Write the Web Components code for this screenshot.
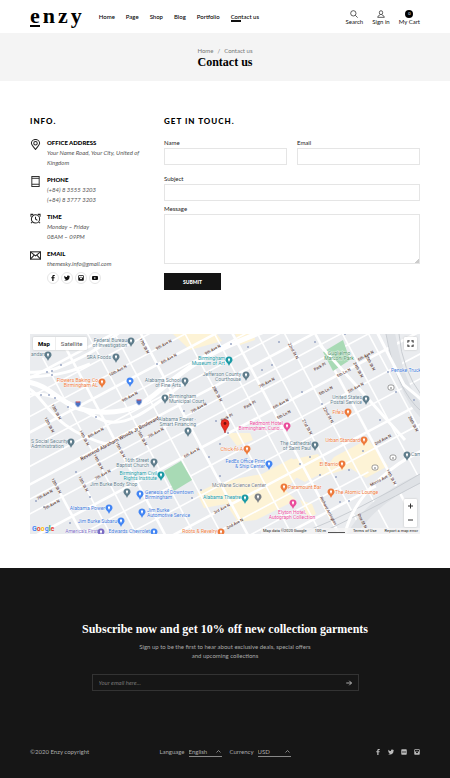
<!DOCTYPE html>
<html lang="en">
<head>
<meta charset="utf-8">
<meta name="viewport" content="width=device-width, initial-scale=1">
<title>Contact us – Enzy</title>
<style>
  body { margin: 0; background: #fff; color: #111; font: 5px/10px Lato, "Open Sans", sans-serif; }
</style>
</head>
<body>
<enzy-page></enzy-page>
<script>
const define = (name, html, setup) => {
  const tpl = document.createElement('template');
  tpl.innerHTML = '<style>*{box-sizing:border-box}a{color:inherit;text-decoration:none}button,input,select,textarea{font:inherit;color:inherit;margin:0;padding:0;border:0;background:none;border-radius:0}h1,h2,h3,p{margin:0}</style>' + html;
  customElements.define(name, class extends HTMLElement {
    constructor() {
      super();
      this.attachShadow({ mode: 'open' }).append(tpl.content.cloneNode(true));
    }
    connectedCallback() { if (setup) setup(this, this.shadowRoot); }
  });
};

const icons = {
  search: '<g fill="none" stroke="currentColor" stroke-width="2"><circle cx="10" cy="10" r="8"/><path d="M16 16l7 7"/></g>',
  user: '<g fill="none" stroke="currentColor" stroke-width="2"><ellipse cx="12" cy="8" rx="5" ry="6"/><path d="M9 14c0 3-7 2-7 8h20c0-6-7-5-7-8"/></g>',
  pin: '<g fill="none" stroke="currentColor" stroke-width="2.200"><path d="M12 23C8 17 3 13 3 9.500a9 8.500 0 0 1 18 0c0 3.500-5 7.500-9 13.500z"/><circle cx="12" cy="9.500" r="3.800"/></g>',
  phone: '<g fill="none" stroke="currentColor" stroke-width="2"><rect x="4" y="1" width="16" height="22"/><path d="M4 5h16M4 18h16"/></g>',
  clock: '<g fill="none" stroke="currentColor" stroke-width="2.200"><circle cx="12" cy="13" r="9"/><path d="M12 8v5l4 3M2 8V3h5M22 8V3h-5M5 20l-3 2M19 20l3 2"/></g>',
  mail: '<g fill="none" stroke="currentColor" stroke-width="2.200"><rect x="1" y="4" width="22" height="16"/><path d="M1 4l11 9L23 4M1 20l8-9M23 20l-8-9"/></g>',
  facebook: '<path fill="currentColor" d="M9 24V13H5V9h4V6c0-4 2-6 6-6h4v4h-3c-2 0-2 1-2 2v3h5l-1 4h-4v11z"/>',
  twitter: '<path fill="currentColor" d="M24 5l-3 1 2-3-3 1c-4-4-9 0-8 4C7 8 4 6 2 3c-2 3 0 6 1 7L1 9c0 3 2 5 4 6H3c1 2 3 3 5 3-2 2-5 2-8 2 12 6 22-1 22-12z"/>',
  instagram: '<path fill="currentColor" fill-rule="evenodd" d="M4 1h16a3 3 0 0 1 3 3v16a3 3 0 0 1-3 3H4a3 3 0 0 1-3-3V4a3 3 0 0 1 3-3zM4 4v6h3a6 6 0 0 1 10 0h3V4zM12 9a4 4 0 1 0 0 8 4 4 0 0 0 0-8z"/>',
  youtube: '<path fill="currentColor" fill-rule="evenodd" d="M4 4h16q4 0 4 4v8q0 4-4 4H4q-4 0-4-4V8q0-4 4-4zM9 8v8l7-4z"/>',
  flickr: '<path fill="currentColor" fill-rule="evenodd" d="M4 1h16a3 3 0 0 1 3 3v16a3 3 0 0 1-3 3H4a3 3 0 0 1-3-3V4a3 3 0 0 1 3-3zM8 9a3 3 0 1 0 0 6 3 3 0 0 0 0-6zM16 9a3 3 0 1 0 0 6 3 3 0 0 0 0-6z"/>',
  arrow: '<path fill="none" stroke="currentColor" stroke-width="3" d="M1 12h21M13 3l9 9-9 9"/>',
  expand: '<path fill="none" stroke="currentColor" stroke-width="3.500" d="M3 9V3h6M15 3h6v6M21 15v6h-6M9 21H3v-6"/>',
  plus: '<path fill="none" stroke="currentColor" stroke-width="4" d="M2 12h20M12 2v20"/>',
  minus: '<path fill="none" stroke="currentColor" stroke-width="4" d="M2 12h20"/>'
};
define('ui-icon', '<style>:host{display:block;width:8px;height:8px}svg{display:block;width:100%;height:100%}</style><svg viewBox="0 0 24 24" aria-hidden="true"></svg>',
  (el, root) => { root.querySelector('svg').innerHTML = icons[el.getAttribute('name')]; });

define('enzy-header', `<style>
  :host{display:flex;height:33px;padding:0 30px;align-items:center;justify-content:space-between;font-size:6px;line-height:8px;color:#111}
  .left,nav,.tools{display:flex}
  .left{align-items:center;gap:17px}
  .logo{font:bold 22px/22px "Liberation Serif",serif;letter-spacing:3px;margin-right:-3px;padding-bottom:2px;color:#000}
  .logo span{display:inline-block;position:relative}
  .logo span::after{content:"";position:absolute;left:0;right:3px;bottom:0;height:2px;background:#000}
  nav{gap:11px;font-weight:500;color:#000}
  nav a{position:relative}
  .on::after{content:"";position:absolute;left:0;bottom:-1px;width:10px;height:2px;background:#111}
  .tools{gap:9px;padding-top:3px}
  .tools a{display:flex;flex-direction:column;align-items:center}
  .count{width:8px;height:8px;border-radius:50%;background:#000;color:#fff;font-size:4px;text-align:center}
</style>
<div class="left"><a class="logo" href="#"><span>e</span>nzy</a>
<nav><a href="#">Home</a><a href="#">Page</a><a href="#">Shop</a><a href="#">Blog</a><a href="#">Portfolio</a><a class="on" href="#">Contact us</a></nav></div>
<div class="tools"><a href="#"><ui-icon name="search"></ui-icon>Search</a><a href="#"><ui-icon name="user"></ui-icon>Sign in</a><a href="#"><span class="count">0</span>My Cart</a></div>`);

define('enzy-title', `<style>
  :host{display:block;background:#f4f4f4;padding:13px 30px 12px;text-align:center}
  nav{font-size:6px;line-height:10px;color:#777}
  nav span{margin:0 4px}
  h1{font:bold 12px/13px "Liberation Serif",serif;color:#000}
</style><nav><a href="#">Home</a><span>/</span>Contact us</nav><h1><slot></slot></h1>`);

define('info-item', `<style>
  :host{display:grid;grid-template-columns:11px 1fr;column-gap:6px;font-size:6px;font-style:italic;color:#555}
  ui-icon{width:11px;height:11px;color:#222;margin-top:1px}
  h3{font-size:6px;line-height:10px;font-style:normal;font-weight:900;color:#000}
</style><div class="icon"></div><div><h3></h3><slot></slot></div>`, (el, root) => {
  root.querySelector('.icon').innerHTML = '<ui-icon name="' + el.getAttribute('icon') + '"></ui-icon>';
  root.querySelector('h3').textContent = el.getAttribute('label');
});

define('social-link', `<style>
  :host{display:block}
  a{display:grid;place-items:center;width:12px;height:12px;border-radius:50%}
  :host([ring]) a{border:1px solid #e6e6e6}
  ui-icon{width:6px;height:6px}
</style><a href="#"></a>`, (el, root) => {
  const n = el.getAttribute('name'), a = root.querySelector('a');
  a.setAttribute('aria-label', n);
  a.innerHTML = '<ui-icon name="' + n + '"></ui-icon>';
});

define('enzy-info', `<style>
  :host{display:flex;flex-direction:column;gap:7px;padding-right:20px}
  h2{font-size:8px;line-height:10px;font-weight:900;letter-spacing:1px;color:#000;margin-bottom:5px}
  p{line-height:10px}
  .social{display:flex;gap:2px;margin-top:3px;color:#111}
</style><h2>INFO.</h2>
<info-item icon="pin" label="OFFICE ADDRESS"><p>Your Name Road, Your City, United of Kingdom</p></info-item>
<info-item icon="phone" label="PHONE"><p>(+84) 8 3555 3203</p><p>(+84) 8 3777 3203</p></info-item>
<info-item icon="clock" label="TIME"><p>Monday – Friday</p><p>08AM – 09PM</p></info-item>
<info-item icon="mail" label="EMAIL"><p>themesky.info@gmail.com</p>
<div class="social"><social-link ring name="facebook"></social-link><social-link ring name="twitter"></social-link><social-link ring name="instagram"></social-link><social-link ring name="youtube"></social-link></div></info-item>`);

define('form-field', `<style>
  :host{display:block}
  label{display:block;font-size:6px;line-height:11px;color:#222}
  input,textarea{display:block;width:100%;height:17px;border:1px solid #e5e5e5;padding:0 6px;background:#fff;outline:0}
  textarea{height:50px;padding:6px;resize:none}
  .box{position:relative}
  .grip{position:absolute;right:1px;bottom:1px;width:4px;height:4px;background:linear-gradient(135deg,transparent 50%,#ccc 50%)}
</style><label for="f"></label><div class="box"></div>`, (el, root) => {
  root.querySelector('label').textContent = el.getAttribute('label');
  root.querySelector('.box').innerHTML = el.hasAttribute('multiline') ? '<textarea id="f"></textarea><span class="grip"></span>' : '<input id="f" type="text">';
});

define('enzy-form', `<style>
  :host{display:block}
  h2{font-size:8px;line-height:10px;font-weight:900;letter-spacing:1px;color:#000;margin-bottom:11px}
  .row{display:grid;grid-template-columns:1fr 1fr;gap:10px;margin-bottom:8px}
  .msg{padding-top:2px}
  button{display:block;margin-top:9px;width:57px;height:17px;background:#141414;color:#fff;font-size:5px;font-weight:900}
</style><form><h2>GET IN TOUCH.</h2>
<div class="row"><form-field label="Name"></form-field><form-field label="Email"></form-field></div>
<form-field label="Subject"></form-field><form-field class="msg" label="Message" multiline></form-field>
<button type="button">SUBMIT</button></form>`);

/* Street grid: avenues and streets are offsets in a frame turned by 28 degrees round the marker. */
const avenues = [-134, -117, -100, -86, -72, -56, -40, -27, -14, 8, 28, 50, 72, 90, 108, 124];
const streets = [-177, -152, -129, -104, -78, -54, -31, 8, 34, 50, 72, 96, 123, 147, 170];
const G = '#5f7d8c', O = '#ee7a3b', B = '#3c78d8', T = '#1b9aa5', P = '#ea4c9b';
/* x, y, anchor, colour, lines, pin x, pin y */
const places = [
  [127,342,'end',G,['Federal Bureau','of Investigation'],131,342],
  [31,356,'start',G,['andard'],48,356],
  [111,359,'end',G,['SRA Foods'],116,358],
  [98,382,'end',O,['Flowers Baking Co','Birmingham AL'],102,383],
  [181,382,'end',G,['Alabama School','of Fine Arts'],185,382],
  [225,360,'end',T,['Birmingham','Museum of Art'],229,361],
  [241,376,'end',G,['Jefferson County','Courthouse'],246,376],
  [169,398,'start',G,['Birmingham','Municipal Court'],165,399],
  [196,421,'end',G,['Alabama Power -','Smart Financing'],188,432],
  [283,425,'end',P,['Redmont Hotel','Birmingham, Curio…'],287,427],
  [339,355,'middle','#3f8f5a',['Guglielmo','Marconi Park']],
  [391,372,'start',B,['Penske Truck']],
  [362,399,'end',G,['United States','Postal Service'],366,400],
  [344,414,'end',O,["Fife's"],348,413],
  [31,443,'start',G,['S Social Security','Administration'],71,443],
  [149,462,'end',G,['16th Street','Baptist Church'],154,463],
  [157,475,'end',T,['Birmingham Civil','Rights Institute'],161,476],
  [90,486,'start',G,['Jim Burke Body Shop'],127,493],
  [145,494,'start',B,['Genesis of Downtown','Birmingham'],140,495],
  [105,510,'end',B,['Alabama Power'],109,509],
  [147,512,'start',B,['Jim Burke','Automotive Service'],142,513],
  [117,523,'end',B,['Jim Burke Subaru'],121,522],
  [98,533,'end','#7b6cc4',["America's First"],101,533],
  [150,533,'end',B,['Edwards Chevrolet'],154,533],
  [243,451,'end',O,['Chick-fil-A'],247,450],
  [265,463,'end',B,['FedEx Office Print','& Ship Center'],269,465],
  [311,445,'end',G,['The Cathedral','of Saint Paul'],315,446],
  [266,487,'end','#7a7f86',['McWane Science Center'],258,498],
  [241,499,'end',T,['Alabama Theatre'],245,499],
  [292,514,'middle',P,['Elyton Hotel,','Autograph Collection'],293,504],
  [217,533,'end',O,['Roots & Revelry'],221,533],
  [288,489,'start',O,['Paramount Bar'],284,488],
  [360,442,'end',O,['Urban Standard'],364,441],
  [338,466,'end',O,['El Barrio'],342,465],
  [335,494,'start',O,['The Atomic Lounge'],331,493],
  [411,456,'start',G,['Cam'],407,456]
];
/* x, y, angle, text */
const roads = [
  [118,371,-28,'10th Ave N'],[130,397,-28,'9th Ave N'],[56,412,62,'13th St N'],[49,425,62,'12th St N'],[144,346,62,'17th St N'],
  [164,345,-28,'9th Ave N'],[169,359,-28,'8th Ave N'],[213,350,-28,'9th Ave N'],[217,394,62,'20th St N'],[199,408,-28,'7th Ave N'],
  [227,418,-28,'Park Pl'],[250,405,-28,'Park Pl'],[267,383,-28,'7th Ave N'],[281,404,-28,'6th Ave N'],[284,415,-28,'5th Ln N'],
  [293,351,62,'22nd St N'],[320,367,-28,'Park Pl'],[344,373,-28,'5th Ln N'],[366,356,-28,'6th Ave N'],[358,370,62,'24th St N'],
  [370,363,62,'25th St N'],[326,391,-28,'5th Ln N'],[356,388,-28,'5th Ave N'],[328,415,62,'22nd St N'],[307,427,62,'21st St N'],
  [413,424,62,'26th St N'],[84,438,62,'14th St N'],[98,462,62,'14th St N'],[120,450,62,'15th St N'],[142,438,62,'16th St N'],
  [56,486,62,'12th St N'],[83,484,62,'13th St N'],[103,475,-28,'7th Ave N'],[45,495,-28,'7th Ave N'],[52,505,-28,'7th Ave N'],
  [96,433,-28,'8th Ave N'],[156,433,-28,'7th Ave N'],[192,453,-28,'6th Ave N'],[222,509,-28,'3rd Ave N'],[235,524,-28,'2nd Ave N'],
  [383,440,-28,'2nd Ave N'],[379,481,-28,'Morris Ave'],[391,477,62,'14th St N'],[328,511,62,'Richard Arrington'],[362,521,62,'One St N']
];
define('enzy-map', `<style>
  :host{display:block;position:relative;height:200px;overflow:hidden;background:#eaecef;font-family:Roboto,sans-serif}
  svg{display:block;width:100%;height:100%}
  .panel{position:absolute;background:#fff;border-radius:1px;box-shadow:0 0 2px #bbb;color:#333}
  .type{left:3px;top:3px;display:flex;font-size:6px;line-height:13px}
  .type button{padding:0 5px;color:#555}
  .type button:first-child{color:#000;font-weight:bold;border-right:1px solid #eee}
  .full{right:3px;top:3px;padding:3px}
  .full button,.zoom button{display:block}
  .full ui-icon{width:7px;height:7px}
  .zoom{right:3px;bottom:7px}
  .zoom button{padding:4px 3px}
  .zoom ui-icon{width:7px;height:6px}
  .legal{position:absolute;right:0;bottom:0;display:flex;gap:8px;font-size:4px;line-height:6px;padding:0 2px;background:#f5f5f5cc;color:#222}
  .scale{border-bottom:1px solid #555;width:17px;height:5px;margin-left:-6px}
  .google{position:absolute;left:2px;bottom:0;font:bold 7px/9px Roboto,sans-serif;color:#4285f4;text-shadow:0 0 1px #fff}
  .r{color:#ea4335}.y{color:#fbbc05}.g{color:#34a853}
</style>
<svg viewBox="30 334 390 200" preserveAspectRatio="xMidYMid slice" role="img" aria-label="Map of Birmingham"></svg>
<div class="panel type"><button type="button">Map</button><button type="button">Satellite</button></div>
<div class="panel full"><button type="button" aria-label="Full screen"><ui-icon name="expand"></ui-icon></button></div>
<div class="panel zoom"><button type="button" aria-label="Zoom in"><ui-icon name="plus"></ui-icon></button><button type="button" aria-label="Zoom out"><ui-icon name="minus"></ui-icon></button></div>
<a class="google" href="#">G<span class="r">o</span><span class="y">o</span>g<span class="g">l</span><span class="r">e</span></a>
<div class="legal"><span>Map data ©2020 Google</span><span>100 m</span><span class="scale"></span><a href="#">Terms of Use</a><a href="#">Report a map error</a></div>`, (el, root) => {
  const poly = (c, ...ps) => ps.map(p => `<polygon fill="${c}" points="${p}"/>`).join('');
  let s = poly('#fdf3d6', '173,334 217,334 222,341 190,350', '235,334 254,334 255,340 240,345', '227,433 250,433 253,440 237,446',
    '197,493 213,485 240,478 262,474 292,458 300,474 285,490 296,500 256,520 238,522 226,504 204,508', '290,460 318,454 328,470 305,482 290,474',
    '334,457 368,439 388,466 366,478 350,468 318,478', '300,500 312,504 316,514 308,518');
  s += '<g transform="rotate(-28 225 426)" stroke="#fff" fill="none">';
  avenues.forEach((v, i) => s += `<path stroke-width="${i % 3 ? 1.6 : 2.6}" d="M-20 ${426 + v}H${v > 105 || v < -110 ? 330 : 460}"/>`);
  streets.forEach((u, i) => s += `<path stroke-width="${i % 3 ? 1.6 : 2.6}" d="M${225 + u} ${u < -140 ? 405 : 280}V600"/>`);
  s += '</g>';
  s += poly('#a8dab5', '164,471 181,461 192,480 174,491', '323,352 343,340 350,360 333,371');
  s += `<g fill="none" stroke="#dfe2e6" stroke-width="9"><path d="M350 538Q370 500 422 478"/><path d="M390 330Q400 390 424 415"/></g>
  <g fill="none" stroke="#c9cdd2" stroke-width="1"><path d="M300 534Q360 510 420 474M310 538Q370 510 422 482M386 334Q396 390 422 412M399 334Q402 370 422 396"/></g>
  <g fill="none" stroke="#fff"><path stroke-width="5" d="M28 382C55 386 60 410 100 412S150 397 175 378S215 350 262 332"/>
  <path stroke-width="3" d="M28 372C50 374 65 365 80 358S105 344 120 332M28 377C60 376 75 370 90 364M28 388C45 396 50 430 110 445"/>
  <path stroke-width="3" d="M28 394C55 392 75 406 100 419S155 405 185 382"/>
  <path stroke-width="3" d="M320 345L405 440M376 330L404 385L422 400M345 534C355 490 400 460 424 450"/></g>`;
  s += '<g fill="#98a6c4">';
  [[47,372],[52,371],[52,375],[41,395],[49,395],[55,398],[68,407],[96,417],[61,365],[157,364],[231,344],[248,347],[279,342],[262,370],[272,365],[345,334],[315,342],[388,372],[396,392],[380,420],[414,400],[302,392],[322,404],[184,411],[216,421],[215,390],[209,457],[220,444],[228,433],[220,476],[192,498],[201,490],[76,472],[90,497],[300,464],[310,457],[320,475],[336,477],[349,470],[363,451],[349,501],[340,502],[36,501],[44,507],[70,523],[291,448]].forEach(([x, y]) => s += `<circle cx="${x}" cy="${y}" r="1"/>`);
  s += '</g><g font-size="4" font-weight="500" fill="#5f4038" text-anchor="middle">';
  roads.forEach(([x, y, a, t]) => s += `<text transform="translate(${x} ${y}) rotate(${a})" y="1">${t}</text>`);
  s += '<text transform="translate(120 439) rotate(-28)" y="1" font-size="5">Reverend Abraham Woods Jr Boulevard</text>';
  s += '</g><g font-size="5" stroke="#fff" stroke-width=".6" paint-order="stroke">';
  places.forEach(([x, y, anchor, c, lines]) => lines.forEach((l, i) => s += `<text x="${x}" y="${y + i * 5}" text-anchor="${anchor}" fill="${c}">${l}</text>`));
  s += '</g>';
  const drop = 'M0 5C-1 2-3.500 1-3.500-1a3.500 3.500 0 0 1 7 0C3.500 1 1 2 0 5z';
  places.forEach(([, , , c, , px, py]) => {
    if (px) s += `<g transform="translate(${px} ${py})"><path fill="${c === B ? '#4285f4' : c}" d="${drop}"/><path fill="#fff" d="M-1-2.500h2v2h-.500v1h-1v-1h-.500z"/></g>`;
  });
  s += `<g transform="translate(130 382)"><path fill="#4285f4" d="${drop}"/><circle cy="-1" r="1.300" fill="#fff"/></g>`;
  [[78,404],[139,402]].forEach(([x, y]) => s += `<path transform="translate(${x} ${y})" fill="#4a72c4" stroke="#fff" stroke-width=".6" d="M-3-3Q0-2 3-3Q4 1 0 3.500Q-4 1-3-3z"/><path transform="translate(${x} ${y})" d="M-2-2h4" stroke="#e0534a"/>`);
  [[391,387],[375,467],[393,457]].forEach(([x, y]) => s += `<rect x="${x - 3}" y="${y - 2}" width="6" height="5" rx="2" fill="#fff" stroke="#777" stroke-width=".7"/><path d="M${x - 1} ${y + 1}h2" stroke="#777"/>`);
  s += '<path fill="#ea2b1f" stroke="#b31412" stroke-width=".6" d="M225 433C224 428 221 427 221 423.500a4 4 0 0 1 8 0C229 427 226 428 225 433z"/><circle cx="225" cy="423.500" r="1.400" fill="#7a0f0c"/>';
  root.querySelector('svg').innerHTML = s;
});

define('footer-select', `<style>
  :host{display:flex;align-items:center;gap:4px;font-size:6px;line-height:10px}
  .box{position:relative;width:33px;border-bottom:1px solid #888}
  select{appearance:none;display:block;width:100%;height:9px;outline:0}
  option{color:#111}
  svg{position:absolute;right:1px;top:3px;width:5px;height:3px;pointer-events:none}
</style><label for="s"></label><span class="box"><select id="s"><option></option></select><svg viewBox="0 0 10 6" aria-hidden="true"><path d="M1 5l4-4 4 4" fill="none" stroke="#aaa" stroke-width="1.500"/></svg></span>`, (el, root) => {
  root.querySelector('label').textContent = el.getAttribute('label');
  root.querySelector('option').textContent = el.getAttribute('value');
});

define('enzy-footer', `<style>
  :host{display:block;background:#161616;color:#aaa;padding:54px 30px 20px}
  h2{font:bold 12px/14px "Liberation Serif",serif;color:#fff;text-align:center}
  p{margin:6px auto 14px;font-size:6px;line-height:9px;text-align:center}
  form{display:flex;align-items:center;max-width:267px;height:17px;margin:0 auto;border:1px solid #333;padding:0 6px}
  input{flex:1;min-width:0;font-size:6px;font-style:italic;outline:0}
  input::placeholder{color:#777;opacity:1}
  form ui-icon{width:6px;height:6px;color:#ddd}
  .bottom{display:grid;grid-template-columns:1fr auto 1fr;align-items:center;margin-top:55px;font-size:6px}
  .selects{display:flex;gap:8px}
  .social{display:flex;gap:1px;justify-content:flex-end;margin-right:-3px;color:#bbb}
</style><h2>Subscribe now and get 10% off new collection garments</h2>
<p>Sign up to be the first to hear about exclusive deals, special offers<br>and upcoming collections</p>
<form><input type="email" aria-label="Your email" placeholder="Your email here..."><button type="button" aria-label="Subscribe"><ui-icon name="arrow"></ui-icon></button></form>
<div class="bottom"><span>©2020 Enzy copyright</span>
<div class="selects"><footer-select label="Language" value="English"></footer-select><footer-select label="Currency" value="USD"></footer-select></div>
<div class="social"><social-link name="facebook"></social-link><social-link name="twitter"></social-link><social-link name="flickr"></social-link><social-link name="instagram"></social-link></div></div>`);

define('enzy-page', `<style>
  :host{display:flex;flex-direction:column;min-height:100vh}
  main{padding:0 30px}
  .contact{display:grid;grid-template-columns:134fr 256fr;padding:35px 0 44px}
  enzy-footer{margin-top:34px;flex:1}
</style><enzy-header></enzy-header><enzy-title>Contact us</enzy-title>
<main><div class="contact"><enzy-info></enzy-info><enzy-form></enzy-form></div><enzy-map></enzy-map></main>
<enzy-footer></enzy-footer>`);
</script>
</body>
</html>
